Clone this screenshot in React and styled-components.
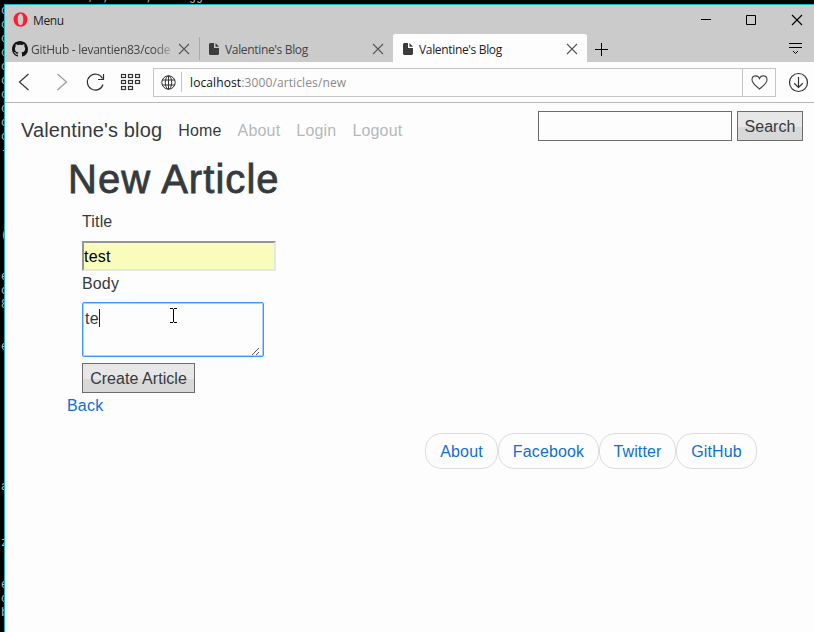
import React from "react";
import styled, { createGlobalStyle, css } from "styled-components";

const Global = createGlobalStyle`
  * { box-sizing: border-box; }
  html, body { margin: 0; background: #000; overflow: hidden; }
  svg { display: block; flex: none; overflow: visible; }
`;

const Desktop = styled.div`
  display: grid;
  grid-template: 4px 628px / 4px 810px;
  width: 814px;
  height: 632px;
  background: #000;
  overflow: hidden;
`;

const terminalText = css`
  margin: 0;
  overflow: hidden;
  color: #b4bcc0;
  font: 12px/14px "Liberation Mono", monospace;
  white-space: pre;
`;

const TerminalTop = styled.pre`
  ${terminalText}
  grid-column: 1 / 3;
  display: flex;
  align-items: flex-end;
  padding-left: 23px;
`;

const TerminalSide = styled.pre`
  ${terminalText}
  padding-left: 1px;
`;

const Window = styled.div`
  display: flex;
  flex-direction: column;
  border: solid #14b4bd;
  border-width: 1px 0 0 1px;
  background: #fdfdfd;
  min-width: 0;
`;

const TitleBar = styled.div`
  display: flex;
  align-items: center;
  height: 29px;
  padding: 0 12px 0 8px;
  background: #cbcbcb;
`;

const chromeFont = css`
  font-family: "Open Sans", sans-serif;
  font-size: 12px;
  line-height: 16px;
  white-space: nowrap;
`;

const MenuLabel = styled.span`
  ${chromeFont}
  margin: 2px 0 0 5px;
  color: #222;
  letter-spacing: -0.4px;
`;

const WindowControls = styled.div`
  display: flex;
  align-items: center;
  gap: 35px;
  margin-left: auto;
`;

const TabStrip = styled.div`
  display: flex;
  height: 28px;
  background: #cbcbcb;
`;

const Tab = styled.div`
  display: flex;
  align-items: center;
  width: ${(p) => p.$width}px;
  padding: 2px ${(p) => p.$end}px 0 ${(p) => p.$start}px;
  background: ${(p) => (p.$active ? "#fdfdfd" : "transparent")};
  border-radius: 2px 2px 0 0;
  color: ${(p) => (p.$active ? "#222" : "#444")};
`;

const TabTitle = styled.span`
  ${chromeFont}
  flex: 1;
  min-width: 0;
  margin: 0 ${(p) => (p.$fade ? 8 : 10)}px 0 ${(p) => (p.$fade ? 3 : 5)}px;
  padding-top: 2px;
  overflow: hidden;
  letter-spacing: ${(p) => (p.$fade ? -0.27 : -0.34)}px;
  ${(p) => p.$fade && css`
    mask-image: linear-gradient(90deg, #000 88%, transparent 104%);
  `}
`;

const TabDivider = styled.div`
  width: 1px;
  height: 23px;
  margin-top: 3px;
  background: #aaa;
`;

const TabActions = styled.div`
  display: flex;
  flex: 1;
  align-items: center;
  justify-content: space-between;
  padding: 2px 12px 0 8px;
`;

const Toolbar = styled.div`
  display: flex;
  align-items: center;
  height: 41px;
  padding: 0 6px 0 14px;
  border-bottom: 1px solid #b5b5b5;
`;

const NavIcons = styled.div`
  display: flex;
  align-items: center;
  width: 134px;
`;

const AddressBar = styled.div`
  display: flex;
  align-items: center;
  width: 623px;
  height: 29px;
  padding-left: 7px;
  border: 1px solid #c5c5c5;
`;

const AddressDivider = styled.div`
  width: 1px;
  height: 20px;
  margin: 0 8px 0 5px;
  background: #c5c5c5;
`;

const Url = styled.span`
  ${chromeFont}
  padding-top: 2px;
  color: #8a8a8a;
  letter-spacing: 0.11px;
`;

const UrlHost = styled.span`
  color: #111;
`;

const Favorite = styled.div`
  display: flex;
  align-items: center;
  justify-content: center;
  width: 33px;
  height: 27px;
  margin-left: auto;
  border-left: 1px solid #c5c5c5;
`;

const DownloadSlot = styled.div`
  margin-left: auto;
`;

const Page = styled.main`
  color: #373a3c;
  font: 16px/24px "Liberation Sans", Arial, sans-serif;
`;

const Navbar = styled.nav`
  display: flex;
  align-items: flex-start;
  height: 50px;
  padding: 8px 11px 0 16px;
`;

const Brand = styled.a`
  margin: 4px 16px 0 0;
  font-size: 20px;
  line-height: 30px;
  letter-spacing: 0.13px;
`;

const NavLink = styled.a`
  margin: 8px 16px 0 0;
  color: ${(p) => (p.$active ? "#373a3c" : "#b5b8ba")};
  letter-spacing: 0.18px;
`;

const SearchForm = styled.form`
  display: flex;
  gap: 5px;
  margin: 0 0 0 auto;
`;

const SearchInput = styled.input`
  width: 194px;
  height: 30px;
  border: 1px solid #6c6c6c;
  background: #fdfdfd;
  outline: 0;
`;

const Button = styled.button`
  width: ${(p) => p.$width}px;
  height: 30px;
  padding: 2px 0 0;
  border: 1px solid #6c6c6c;
  background: linear-gradient(#e7e7e7 52%, #d8d8d8 52%);
  color: #373a3c;
  font: inherit;
  letter-spacing: 0.05px;
`;

const Container = styled.section`
  padding: 0 0 0 62px;
`;

const Heading = styled.h1`
  height: 52px;
  margin: 0;
  padding: 2px 0 0 1px;
  font-size: 40px;
  font-weight: 400;
  line-height: 48px;
  letter-spacing: 1.05px;
  -webkit-text-stroke: 0.8px #373a3c;
`;

const ArticleForm = styled.form`
  display: flex;
  flex-direction: column;
  align-items: flex-start;
  margin: 0;
  padding-left: 15px;
`;

const Label = styled.label`
  height: ${(p) => p.$height}px;
  padding-top: ${(p) => p.$top}px;
  letter-spacing: 0.15px;
`;

const TitleInput = styled.input`
  width: 194px;
  height: 30px;
  padding: 1px 0 0;
  border: 2px solid;
  border-color: #959595 #e6e6e6 #e6e6e6 #959595;
  background: #f8fdbc;
  color: #000;
  font: inherit;
  letter-spacing: 0.2px;
  outline: 0;
`;

const BodyField = styled.div`
  display: flex;
  justify-content: space-between;
  width: 182px;
  height: 55px;
  margin-bottom: 6px;
  padding: 4px 1px 0 1px;
  border: 1px solid #3b99fc;
  border-radius: 2px;
  box-shadow: inset 0 0 0 1px #a9d1fc;
`;

const Typed = styled.div`
  display: flex;
  height: 24px;
  margin-left: 1px;
  letter-spacing: 0.2px;
`;

const Caret = styled.i`
  width: 1px;
  height: 18px;
  margin-top: 2px;
  background: #222;
`;

const Back = styled.a`
  display: block;
  height: 39px;
  margin-top: 1px;
  color: #0f6fd3;
  letter-spacing: 0.2px;
`;

const FooterLinks = styled.footer`
  display: flex;
  margin-left: 358px;
`;

const Pill = styled.a`
  flex: none;
  width: ${(p) => p.$width}px;
  height: 36px;
  padding-top: 6px;
  border: 1px solid #ddd;
  border-radius: 16px;
  color: #0f6fd3;
  letter-spacing: 0.15px;
  text-align: center;
`;

const Cross = ({ size = 10, color = "#555" }) => (
  <svg width={size} height={size} viewBox="0 0 10 10" stroke={color} strokeWidth="1.1">
    <path d="M0 0 10 10M10 0 0 10" />
  </svg>
);

const Doc = () => (
  <svg width="11" height="12" viewBox="0 0 11 12" fill="#3c3c3c">
    <path d="M1 0H5V5H10V11L9 12H1L0 11V1ZM6.5 0 10 3.8H6.5Z" />
  </svg>
);

const GitHub = () => (
  <svg width="16" height="16" viewBox="0 0 16 16" fill="#151515">
    <path d="M8 0C3.58 0 0 3.58 0 8c0 3.54 2.29 6.53 5.47 7.59.4.07.55-.17.55-.38 0-.19-.01-.82-.01-1.49-2.01.37-2.53-.49-2.69-.94-.09-.23-.48-.94-.82-1.13-.28-.15-.68-.52-.01-.53.63-.01 1.08.58 1.23.82.72 1.21 1.87.87 2.33.66.07-.52.28-.87.51-1.07-1.78-.2-3.64-.89-3.64-3.95 0-.87.31-1.59.82-2.15-.08-.2-.36-1.02.08-2.12 0 0 .67-.21 2.2.82.64-.18 1.32-.27 2-.27s1.36.09 2 .27c1.53-1.04 2.2-.82 2.2-.82.44 1.1.16 1.92.08 2.12.51.56.82 1.27.82 2.15 0 3.07-1.87 3.75-3.65 3.95.29.25.54.73.54 1.48 0 1.07-.01 1.93-.01 2.2 0 .21.15.46.55.38A8.01 8.01 0 0 0 16 8c0-4.42-3.58-8-8-8Z" />
  </svg>
);

const NavGlyphs = () => (
  <svg width="122" height="20" viewBox="0 0 122 20" fill="none" stroke="#333" strokeWidth="1.2">
    <path d="M9.5 2 .5 10 9.5 18" />
    <path d="M38.5 2 47.5 10 38.5 18" stroke="#999" />
    <path d="M83.5 6.5A8 8 0 1 0 84 12.5M84.5 2V7.5H79" />
    {[0, 7, 14].map((x) =>
      [0, 6, 12].map((y) =>
        x === 14 && y === 12 ? null : (
          <rect key={`${x}-${y}`} x={102.5 + x} y={2.5 + y} width="4" height="3" />
        )
      )
    )}
  </svg>
);

const sideRows = {
  0: "c", 1: "c", 2: "c", 3: "c", 4: "c", 5: "c", 6: "c", 7: "c", 8: "c", 9: "c", 10: "-",
  16: "(", 19: "e", 20: "c", 21: "8", 24: "e", 34: "a", 38: "z", 41: "e", 42: "c", 43: "b",
};
const sideText = Array.from({ length: 45 }, (_, i) => sideRows[i] || " ").join("\n");

export default function App() {
  return (
    <>
      <Global />
      <Desktop>
        <TerminalTop>{"a.a.a.n  , ;..n/.;m.m. gg"}</TerminalTop>
        <TerminalSide>{sideText}</TerminalSide>
        <Window>
          <TitleBar>
            <svg width="15" height="15" viewBox="0 0 15 15" fill="#fa1e35">
              <path fillRule="evenodd" d="M7.5 .2a7 7.3 0 1 0 0 14.6a7 7.3 0 1 0 0-14.6ZM7.5 1.8C9.4 1.8 10.3 4.5 10.3 7.5S9.4 13.2 7.5 13.2 4.7 10.5 4.7 7.5 5.6 1.8 7.5 1.8Z" />
            </svg>
            <MenuLabel>Menu</MenuLabel>
            <WindowControls>
              <svg width="10" height="11" stroke="#000"><path d="M0 5.5H10" /></svg>
              <svg width="11" height="11" stroke="#000" fill="none"><path d="M.5 1.5H9.5V10.5H.5Z" /></svg>
              <Cross color="#000" />
            </WindowControls>
          </TitleBar>
          <TabStrip>
            <Tab $width={194} $start={7} $end={10}>
              <GitHub />
              <TabTitle $fade>GitHub - levantien83/codecademy</TabTitle>
              <Cross />
            </Tab>
            <TabDivider />
            <Tab $width={193} $start={9} $end={10}>
              <Doc />
              <TabTitle>Valentine's Blog</TabTitle>
              <Cross />
            </Tab>
            <Tab $active $width={194} $start={10} $end={10}>
              <Doc />
              <TabTitle>Valentine's Blog</TabTitle>
              <Cross />
            </Tab>
            <TabActions>
              <svg width="13" height="13" stroke="#000"><path d="M6.5 0V13M0 6.5H13" /></svg>
              <svg width="13" height="13" stroke="#000" fill="none">
                <path d="M0 .5H13M0 4.5H13M4 8 6.5 10.5 9 8" />
              </svg>
            </TabActions>
          </TabStrip>
          <Toolbar>
            <NavIcons><NavGlyphs /></NavIcons>
            <AddressBar>
              <svg width="15" height="15" viewBox="0 0 15 15" fill="none" stroke="#333">
                <circle cx="7.5" cy="7.5" r="6.7" />
                <ellipse cx="7.5" cy="7.5" rx="3.2" ry="6.7" />
                <path d="M7.5 1V14M1 5H14M1 10H14" />
              </svg>
              <AddressDivider />
              <Url><UrlHost>localhost</UrlHost>:3000/articles/new</Url>
              <Favorite>
                <svg width="17" height="15" viewBox="0 0 17 15" fill="none" stroke="#444" strokeWidth="1.1">
                  <path d="M8.5 14C6 11.8 1 8.5 1 4.7C1 .2 6.8-.5 8.5 3.5C10.2-.5 16 .2 16 4.7C16 8.5 11 11.8 8.5 14Z" />
                </svg>
              </Favorite>
            </AddressBar>
            <DownloadSlot>
              <svg width="19" height="19" viewBox="0 0 19 19" fill="none" stroke="#333" strokeWidth="1.2">
                <circle cx="9.5" cy="9.5" r="9" />
                <path d="M9.5 4V14.5M5.2 10.3 9.5 14.5 13.8 10.3" />
              </svg>
            </DownloadSlot>
          </Toolbar>
          <Page>
            <Navbar>
              <Brand>Valentine's blog</Brand>
              <NavLink $active>Home</NavLink>
              <NavLink>About</NavLink>
              <NavLink>Login</NavLink>
              <NavLink>Logout</NavLink>
              <SearchForm>
                <SearchInput />
                <Button type="button" $width={66}>Search</Button>
              </SearchForm>
            </Navbar>
            <Container>
              <Heading>New Article</Heading>
              <ArticleForm>
                <Label $height={36} $top={5}>Title</Label>
                <TitleInput defaultValue="test" />
                <Label $height={31} $top={1}>Body</Label>
                <BodyField>
                  <Typed>te<Caret /></Typed>
                  <svg width="90" height="50" fill="none" stroke="#000">
                    <path d="M-2 1.5H1M2 1.5H5M1.5 2V15M-2 15.5H1M2 15.5H5" />
                    <path d="M80 48 87 41M84 48 87 45" stroke="#555" />
                  </svg>
                </BodyField>
                <Button type="button" $width={113}>Create Article</Button>
              </ArticleForm>
              <Back>Back</Back>
              <FooterLinks>
                <Pill $width={73}>About</Pill>
                <Pill $width={101}>Facebook</Pill>
                <Pill $width={77}>Twitter</Pill>
                <Pill $width={81}>GitHub</Pill>
              </FooterLinks>
            </Container>
          </Page>
        </Window>
      </Desktop>
    </>
  );
}
